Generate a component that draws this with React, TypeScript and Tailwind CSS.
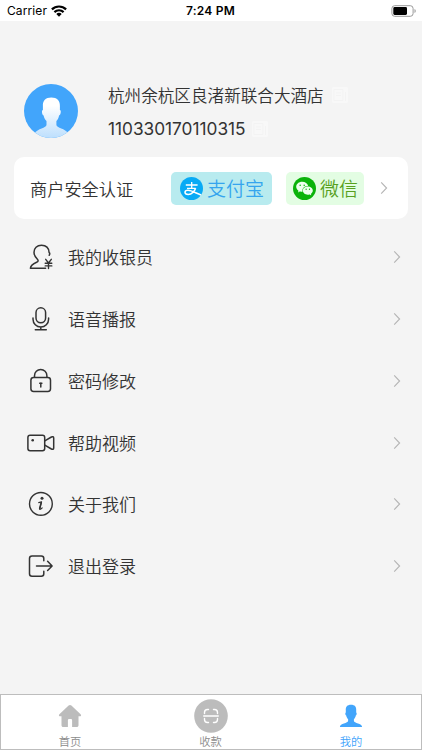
import React from "react";
import { AiFillWechat } from "react-icons/ai";

interface IconProps {
  children: React.ReactNode;
}

const LineIcon: React.FC<IconProps> = ({ children }) => (
  <svg
    viewBox="0 0 28 28"
    fill="none"
    stroke="#333333"
    strokeWidth="1.5"
    strokeLinecap="round"
    strokeLinejoin="round"
    className="w-7 h-7 shrink-0"
  >
    {children}
  </svg>
);

const Chevron = () => (
  <svg
    viewBox="0 0 8 14"
    fill="none"
    stroke="#b4b4b4"
    strokeWidth="1.1"
    className="w-2 h-3.5 shrink-0"
  >
    <path d="M1.2 1.3 6.6 7 1.2 12.7" />
  </svg>
);

const CopyIcon = () => (
  <svg viewBox="0 0 16 16" fill="none" className="w-4 h-4 shrink-0">
    <rect width="16" height="16" rx="2" fill="#f8f8f8" />
    <path
      d="M2 2.500h9v11H2zM13.500 5v9M4 6h5M4 8.500h5"
      stroke="#f3f3f3"
      strokeWidth="1"
    />
  </svg>
);

const AlipayIcon = () => (
  <svg viewBox="0 0 23 23" fill="none" className="w-[23px] h-[23px] shrink-0">
    <circle cx="11.500" cy="11.500" r="11.500" fill="#08aaf5" />
    <g stroke="#ffffff" strokeWidth="1.300">
      <path d="M5.800 8h11.800M11.700 5v6.300M7 11.300h8.700" />
      <path
        d="M15.600 11.300c-.9 2.700-3.700 6.200-7.400 6.200-2 0-3.200-1-3.200-2.200 0-1.300 1.300-2 3-2 3.600 0 8 3 13 4.700"
        strokeWidth="1.500"
      />
    </g>
  </svg>
);

const menuItems = [
  {
    label: "我的收银员",
    icon: (
      <>
        <path d="M22.200 12.200c.8-1 .7-2.200-.1-2.700C21.800 4.800 18.800 2.300 14.500 2.300 9.900 2.300 7 5.300 7 9.200c0 3.500 1.600 5.300 3.400 7.100 1.200 1.200.8 2.300-.8 3C6.200 20.800 3.700 22 3.400 25.200h15.200" />
        <path
          d="m18.700 16.300 2.800 3.700 2.800-3.700M21.500 20v5.600M18.200 20.300h6.600M18.200 22.900h6.600"
          strokeWidth="1.400"
        />
      </>
    ),
  },
  {
    label: "语音播报",
    icon: (
      <>
        <rect x="9" y="2.800" width="9.600" height="15" rx="4.800" />
        <path d="M6 13v1.200a7.800 7.800 0 0 0 15.600 0V13M13.800 22v2.500M8.300 24.700h11" />
      </>
    ),
  },
  {
    label: "密码修改",
    icon: (
      <>
        <rect x="3.900" y="10.500" width="19.600" height="14" rx="2.700" />
        <path d="M7.500 10.300V8.700a6.200 6.200 0 0 1 12.400 0v1.600" />
        <path d="M13.800 16v4M12.700 16.200h2.200" />
      </>
    ),
  },
  {
    label: "帮助视频",
    icon: (
      <>
        <rect x="0.900" y="6.200" width="16.800" height="15.600" rx="2.200" />
        <circle cx="5.700" cy="11.200" r="1.300" fill="#333333" stroke="none" />
        <path d="m17.800 11.800 6.600-3.800c1.300-.7 2.300-.2 2.300 1v10c0 1.200-1 1.700-2.300 1l-6.600-3.800" />
      </>
    ),
  },
  {
    label: "关于我们",
    icon: (
      <>
        <circle cx="13.900" cy="13.900" r="11.400" strokeWidth="1.400" />
        <circle cx="15" cy="8.300" r="1.500" fill="#333333" stroke="none" />
        <path
          d="m11.700 12.600 2.900-.7-1.900 6.700c-.3 1.400 1.200.7 2.500-.8"
          strokeWidth="1.100"
        />
        <path d="m14.200 12.600-1.500 5.900" strokeWidth="1.600" />
      </>
    ),
  },
  {
    label: "退出登录",
    icon: (
      <>
        <path d="M16.800 8.800V6.500c0-1.600-.9-2.500-2.500-2.500H5C3.400 4 2.500 4.900 2.500 6.500v15.300c0 1.600.9 2.500 2.500 2.500h9.300c1.600 0 2.500-.9 2.500-2.500v-2.600" />
        <path d="M9.500 13.900h15.300M20.600 9.200l4.500 4.700-4.500 4.600" />
      </>
    ),
  },
];

const StatusBar = () => (
  <header className="h-[21px] shrink-0 bg-white grid grid-cols-3 items-center pl-[7px] pr-[5px] font-['Inter'] font-normal text-black">
    <div className="flex items-center gap-1">
      <span className="text-[12px] leading-none tracking-[0.1px]">Carrier</span>
      <svg viewBox="0 0 16 12" className="w-4 h-3">
        <path
          d="M.9 4.400a10.200 10.200 0 0 1 14.200 0M3.400 7.100a6.700 6.700 0 0 1 9.200 0"
          fill="none"
          stroke="#000"
          strokeWidth="2.200"
        />
        <path d="M5.300 9a3.900 3.900 0 0 1 5.400 0L8 11.700z" />
      </svg>
    </div>
    <span className="text-center pr-[3px] text-[12px] leading-none font-semibold tracking-[0.200px]">
      7:24 PM
    </span>
    <svg viewBox="0 0 26 12" className="w-[26px] h-3 justify-self-end">
      <rect
        x="0.900"
        y="0.700"
        width="21.200"
        height="10.600"
        rx="2.800"
        fill="none"
        stroke="#999"
        strokeWidth="1"
      />
      <rect x="2.300" y="2.100" width="13.700" height="7.800" rx="1.300" />
      <path d="M23.500 4c1.700.6 1.700 3.400 0 4z" fill="#999" />
    </svg>
  </header>
);

const Profile = () => (
  <section className="flex items-center h-[54px] mt-[63px] pl-6">
    <svg viewBox="0 0 54 54" className="w-[54px] h-[54px] shrink-0">
      <defs>
        <linearGradient id="person" x1="0" y1="0" x2="0" y2="1">
          <stop offset="0.200" stopColor="#ffffff" />
          <stop offset="1" stopColor="#bddffd" />
        </linearGradient>
        <clipPath id="round">
          <circle cx="27" cy="27" r="27" />
        </clipPath>
      </defs>
      <circle cx="27" cy="27" r="27" fill="#42a5fb" />
      <path
        clipPath="url(#round)"
        fill="url(#person)"
        d="M27.300 13.600c5.800 0 8.800 3.200 8.600 8.400v4c1.500.1 1 4.900-.8 5.500-.5 2.700-1.400 4.300-2.700 5.600v3.700c0 3.400 9 3.700 11.900 8.600V54H10.500v-4.600c3-4.900 12-5.200 12-8.600v-3.700c-1.300-1.300-2.400-2.900-2.900-5.600-1.700-.6-2.200-5.400-.7-5.500v-4c-.2-5.200 2.600-8.400 8.400-8.400z"
      />
    </svg>
    <div className="flex flex-col gap-[10px] ml-[30px] pt-[2px] text-[#333333]">
      <div className="flex items-center gap-2 h-6">
        <span className="text-[16.600px] leading-6 whitespace-nowrap">
          杭州余杭区良渚新联合大酒店
        </span>
        <CopyIcon />
      </div>
      <div className="flex items-center gap-[6px] h-6">
        <span className="font-['Inter'] font-normal text-[17.250px] leading-6">
          110330170110315
        </span>
        <CopyIcon />
      </div>
    </div>
  </section>
);

const AuthCard = () => (
  <section className="flex items-center h-[62px] mt-[19px] mx-[14px] pl-4 pr-5 rounded-[10px] bg-white">
    <span className="pt-px text-[17.200px] leading-6 text-[#333333]">
      商户安全认证
    </span>
    <div className="flex items-center h-[33px] w-[101px] ml-auto pl-[9px] gap-1 rounded-[5px] bg-[#b8ebef]">
      <AlipayIcon />
      <span className="text-[19px] leading-6 whitespace-nowrap text-[#35a5ee]">
        支付宝
      </span>
    </div>
    <div className="flex items-center h-[33px] w-[78px] ml-[14px] mr-[16px] pl-[7px] gap-1 rounded-[5px] bg-[#e3fde3]">
      <span className="w-[23px] h-[23px] rounded-full bg-[#0ab30a] flex items-center justify-center shrink-0">
        <AiFillWechat className="w-[19px] h-[19px] text-[#edffed]" />
      </span>
      <span className="text-[19px] leading-6 whitespace-nowrap text-[#58a11f]">
        微信
      </span>
    </div>
    <Chevron />
  </section>
);

const TabBar = () => (
  <nav className="h-14 mt-auto shrink-0 grid grid-cols-3 bg-white border border-[#bdbdbd] text-[11.300px] leading-4 text-[#8c8c8c]">
    <div className="flex flex-col items-center justify-end pr-[2px]">
      <svg viewBox="0 0 24 24" className="w-6 h-6 mb-[5px] fill-[#bcbcbc]">
        <path d="M10.600 1.500q1.400-1.200 2.800 0l9.200 8.700c1 1 .4 2.100-.8 2.100H20.500v8.900c0 1.100-.7 1.800-1.800 1.800h-4.600v-6.400c0-1-.4-1.500-1.200-1.500h-1.800c-.8 0-1.200.5-1.200 1.500V23H5.300c-1.100 0-1.800-.7-1.800-1.800v-8.900H2.200c-1.200 0-1.800-1.100-.8-2.100z" />
      </svg>
      <span>首页</span>
    </div>
    <div className="flex flex-col items-center justify-end pr-px">
      <svg
        viewBox="0 0 34 34"
        fill="none"
        stroke="#ffffff"
        strokeWidth="1.400"
        strokeLinecap="round"
        className="w-[34px] h-[34px]"
      >
        <circle cx="17" cy="17" r="16.800" fill="#bcbcbc" stroke="none" />
        <path d="M10.500 14.500v-1c0-2 1-3 3-3h1M19.500 10.500h1c2 0 3 1 3 3v1M10.500 19.500v1c0 2 1 3 3 3h1M19.500 23.500h1c2 0 3-1 3-3v-1M9.700 17h14.600" />
      </svg>
      <span>收款</span>
    </div>
    <div className="flex flex-col items-center justify-end text-[#3fa4fb]">
      <svg viewBox="0 0 24 24" className="w-6 h-6 mb-[5px] fill-[#42a5fb]">
        <path d="M12 .8c3.900 0 5.400 2.200 5.200 5.500v2.300c.8.100.6 2.600-.4 3-.3 1.700-1 2.700-1.900 3.700v1.400c0 2.800 8.200 2.400 8.200 6.300H.9c0-3.900 8.200-3.500 8.200-6.300v-1.400c-.9-1-1.600-2-1.900-3.700-1-.4-1.200-2.900-.4-3V6.300C6.600 3 8.100.8 12 .8z" />
      </svg>
      <span>我的</span>
    </div>
  </nav>
);

export default function App() {
  return (
    <div className="w-full h-screen flex flex-col overflow-hidden bg-[#f4f4f4] font-['Noto_Sans_CJK_SC',sans-serif] font-[350]">
      <StatusBar />
      <Profile />
      <AuthCard />
      <ul className="mt-[7.300px] flex flex-col">
        {menuItems.map((item) => (
          <li
            key={item.label}
            className="flex items-center h-[61.800px] pl-[27px] pr-[21px] text-[#333333]"
          >
            <LineIcon>{item.icon}</LineIcon>
            <span className="ml-[13px] mr-auto text-[17px] leading-6">
              {item.label}
            </span>
            <Chevron />
          </li>
        ))}
      </ul>
      <TabBar />
    </div>
  );
}
